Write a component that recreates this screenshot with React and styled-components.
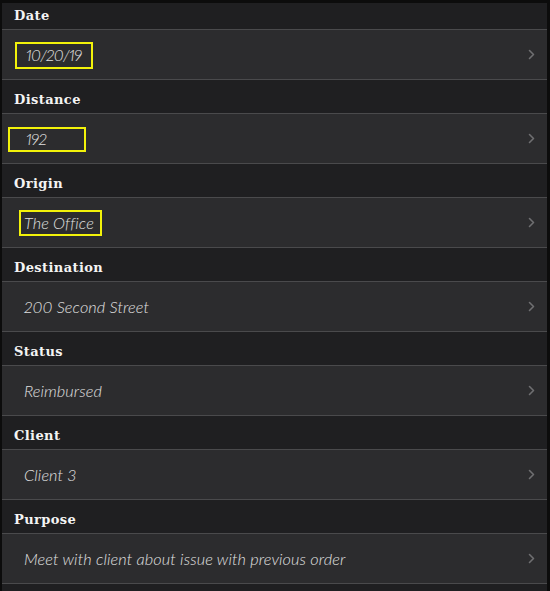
import React from "react";
import styled, { createGlobalStyle } from "styled-components";

const GlobalStyle = createGlobalStyle`
  html, body {
    margin: 0;
    padding: 0;
    background: #0c0c0c;
  }
`;

const Screen = styled("div")`
  width: 550px;
  height: 591px;
  overflow: hidden;
  box-sizing: border-box;
  background: #0c0c0c;
  padding: 3px 3px 0 2px;
`;

const List = styled("div")`
  display: flex;
  flex-direction: column;
  min-height: 100%;
  background: #1f1f21;
`;

const SectionHeader = styled("div")`
  height: ${p => (p.$first ? "27px" : "34px")};
  display: flex;
  align-items: flex-end;
  box-sizing: border-box;
  padding: 0 0 7px 12px;
  background: #1f1f21;
  color: #f4f4f4;
  font-family: "DejaVu Serif", serif;
  font-weight: 700;
  font-size: 13px;
  letter-spacing: 0.4px;
  line-height: 1;
  border-bottom: 1px solid #4a4a4c;
`;

const Row = styled("div")`
  position: relative;
  height: 50px;
  display: flex;
  align-items: center;
  justify-content: space-between;
  box-sizing: border-box;
  padding: 0 12px 0 22px;
  background: #2c2c2e;
  border-bottom: 1px solid #4a4a4c;
  cursor: pointer;
`;

const Value = styled("span")`
  font-family: "Lato", "Open Sans", sans-serif;
  font-style: italic;
  font-weight: 300;
  font-size: 16.3px;
  color: #e0e0e0;
  font-variant-numeric: proportional-nums;
  letter-spacing: ${p => (p.$numeric ? "-0.7px" : "0.1px")};
  padding-left: ${p => (p.$numeric ? "2px" : "0")};
`;

const Highlight = styled("div")`
  position: absolute;
  left: ${p => p.$left}px;
  top: ${p => p.$top}px;
  width: ${p => p.$width}px;
  height: ${p => p.$height}px;
  box-sizing: border-box;
  border: 2px solid #f2f20a;
  pointer-events: none;
`;

const Chevron = () => (
  <svg width="7" height="11" viewBox="0 0 7 11" fill="none">
    <path d="M1.5 1.5 L5.5 5.5 L1.5 9.5" stroke="#6f6f71" strokeWidth="1.6" strokeLinecap="round" strokeLinejoin="round" />
  </svg>
);

const fields = [
  { label: "Date", value: "10/20/19", numeric: true, box: { left: 13, top: 12, width: 78, height: 27 } },
  { label: "Distance", value: "192", numeric: true, box: { left: 6, top: 13, width: 78, height: 25 } },
  { label: "Origin", value: "The Office", box: { left: 17, top: 12, width: 83, height: 26 } },
  { label: "Destination", value: "200 Second Street" },
  { label: "Status", value: "Reimbursed" },
  { label: "Client", value: "Client 3" },
  { label: "Purpose", value: "Meet with client about issue with previous order" },
];

export default function App() {
  return (
    <>
      <GlobalStyle />
      <Screen>
        <List>
          {fields.map((f, i) => (
            <React.Fragment key={f.label}>
              <SectionHeader $first={i === 0}>{f.label}</SectionHeader>
              <Row>
                <Value $numeric={f.numeric}>{f.value}</Value>
                <Chevron />
                {f.box && (
                  <Highlight
                    $left={f.box.left}
                    $top={f.box.top}
                    $width={f.box.width}
                    $height={f.box.height}
                  />
                )}
              </Row>
            </React.Fragment>
          ))}
        </List>
      </Screen>
    </>
  );
}
